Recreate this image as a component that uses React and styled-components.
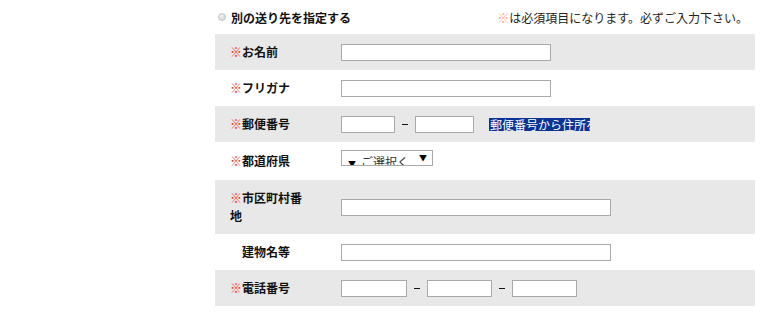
import React from 'react'
import styled, { createGlobalStyle } from 'styled-components';

const GlobalStyle = createGlobalStyle`
    body {
        margin: 0;
        background: #fff;
        font-family: "Noto Sans CJK JP", "Noto Sans", sans-serif;
        font-size: 12px;
        color: #111;
    }
`;

const colors = {
    band: '#e8e8e8',
    border: '#a9a9a9',
    mark: '#ff2a18',
    markLight: '#ff9b8c',
    zipButton: '#0b3393',
};

const StyledForm = styled.div`
    width: 540px;
    margin-left: 215px;
`;

const HeaderRow = styled.div`
    display: flex;
    justify-content: space-between;
    align-items: center;
    height: 34px;
    padding: 0 7px 0 3px;
`;

const RadioLabel = styled.label`
    display: flex;
    align-items: center;
    gap: 5px;
    font-weight: bold;
    color: #111;
`;

const RadioDot = styled.span`
    display: inline-block;
    width: 6px;
    height: 6px;
    border-radius: 50%;
    border: 1px solid #c4c4c4;
    background: radial-gradient(circle at 40% 35%, #f4f4f4 0%, #cfcfcf 100%);
`;

const Notice = styled.div`
    color: #222;
`;

const Mark = styled.span`
    color: ${props => props.$light ? colors.markLight : colors.mark};
    font-weight: normal;
`;

const Row = styled.div`
    display: grid;
    grid-template-columns: 126px 1fr;
    align-items: center;
    padding: 9px 0;
    background: ${props => props.$shaded ? colors.band : '#fff'};
`;

const Label = styled.div`
    padding: 0 33px 0 ${props => props.$indent ? 27 : 15}px;
    font-weight: bold;
    line-height: 18px;
`;

const Field = styled.div`
    display: flex;
    align-items: center;
`;

const TextInput = styled.input`
    box-sizing: border-box;
    width: ${props => props.$w}px;
    height: 17px;
    margin: 0;
    padding: 0 3px;
    border: 1px solid ${colors.border};
    background: #fff;
    font: inherit;
    outline: none;
`;

const Dash = styled.span`
    display: inline-block;
    width: 6px;
    height: 1px;
    background: #111;
    margin: 0 7px;
`;

const ZipButton = styled.span`
    display: inline-block;
    width: 101px;
    height: 13px;
    margin-left: 15px;
    overflow: hidden;
    white-space: nowrap;
    line-height: 13px;
    background: ${colors.zipButton};
    color: #fff;
    padding-left: 1px;
    box-sizing: border-box;
`;

const SelectBox = styled.div`
    display: flex;
    align-items: flex-start;
    box-sizing: border-box;
    width: 92px;
    height: 16px;
    margin: -1px 0 5px;
    padding: 0 5px 0 6px;
    border: 1px solid ${colors.border};
    background: #fff;
    overflow: hidden;
    white-space: nowrap;
`;

const SelectText = styled.span`
    flex: 1;
    overflow: hidden;
    padding-top: 4px;
    line-height: 14px;
    color: #333;
`;

const Tri = styled.span`
    font-size: 8px;
    color: #000;
    margin-right: 5px;
`;

const SelectArrow = styled.span`
    margin-top: 3px;
    margin-left: 10px;
    font-size: 8px;
    line-height: 8px;
    color: #000;
`;

const fields = [
    { label: 'お名前', required: true, kind: 'text', width: 210 },
    { label: 'フリガナ', required: true, kind: 'text', width: 210 },
    { label: '郵便番号', required: true, kind: 'zip' },
    { label: '都道府県', required: true, kind: 'select' },
    { label: '市区町村番地', required: true, kind: 'text', width: 270 },
    { label: '建物名等', required: false, kind: 'text', width: 270 },
    { label: '電話番号', required: true, kind: 'tel' },
];

const renderField = (f) => {
    if (f.kind === 'zip') {
        return (
            <Field>
                <TextInput $w={54} />
                <Dash />
                <TextInput $w={59} />
                <ZipButton>郵便番号から住所を自動入力</ZipButton>
            </Field>
        )
    }
    if (f.kind === 'select') {
        return (
            <Field>
                <SelectBox>
                    <SelectText><Tri>▼</Tri>ご選択ください</SelectText>
                    <SelectArrow>▼</SelectArrow>
                </SelectBox>
            </Field>
        )
    }
    if (f.kind === 'tel') {
        return (
            <Field>
                <TextInput $w={66} />
                <Dash />
                <TextInput $w={65} />
                <Dash />
                <TextInput $w={65} />
            </Field>
        )
    }
    return (
        <Field>
            <TextInput $w={f.width} />
        </Field>
    )
}

const App = () => {
    return (
        <StyledForm>
            <GlobalStyle />
            <HeaderRow>
                <RadioLabel>
                    <RadioDot />
                    別の送り先を指定する
                </RadioLabel>
                <Notice><Mark $light>※</Mark>は必須項目になります。必ずご入力下さい。</Notice>
            </HeaderRow>
            {fields.map((f, i) => (
                <Row key={f.label} $shaded={i % 2 === 0}>
                    <Label $indent={!f.required}>
                        {f.required && <Mark>※</Mark>}{f.label}
                    </Label>
                    {renderField(f)}
                </Row>
            ))}
        </StyledForm>
    )
}

export default App
